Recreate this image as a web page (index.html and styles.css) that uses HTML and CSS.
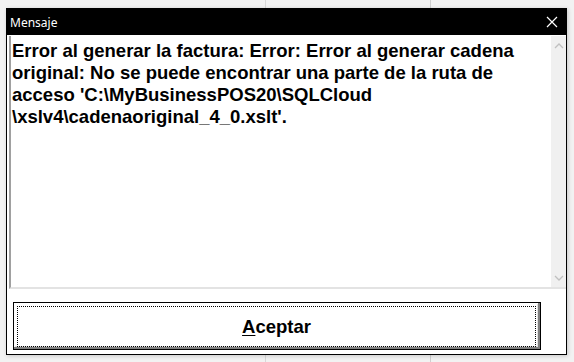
FILE: index.html
```html
<!DOCTYPE html>
<html>
<head>
<meta charset="utf-8">
<link rel="stylesheet" href="styles.css">
</head>
<body>
<div class="backdrop">
  <div class="window">
    <div class="titlebar">
      <span class="title">Mensaje</span>
      <svg class="close" width="12" height="12" viewBox="0 0 12 12"><path d="M1 1 L11 11 M11 1 L1 11" stroke="#fff" stroke-width="1.2" fill="none"/></svg>
    </div>
    <div class="textbox">
      <div class="text">Error al generar la factura: Error: Error al generar cadena original: No se puede encontrar una parte de la ruta de acceso 'C:\MyBusinessPOS20\SQLCloud \xslv4\cadenaoriginal_4_0.xslt'.</div>
      <div class="scrollbar">
        <svg class="arrow" width="10" height="6" viewBox="0 0 10 6"><path d="M1 5 L5 1 L9 5" stroke="#c0c0c0" stroke-width="1.3" fill="none"/></svg>
        <svg class="arrow" width="10" height="6" viewBox="0 0 10 6"><path d="M1 1 L5 5 L9 1" stroke="#c0c0c0" stroke-width="1.3" fill="none"/></svg>
      </div>
    </div>
    <div class="footer">
      <button class="btn"><span class="focus"><u>A</u>ceptar</span></button>
    </div>
  </div>
</div>
</body>
</html>
```
FILE: styles.css
```css
html, body {
  margin: 0;
  padding: 0;
}
body {
  width: 574px;
  height: 362px;
  overflow: hidden;
  background: #f0f0f0;
  font-family: "Liberation Sans", Arial, sans-serif;
}
.backdrop {
  width: 574px;
  height: 362px;
  background:
    linear-gradient(to right, transparent 265px, #d8d8d8 265px, #d8d8d8 266px, transparent 266px, transparent 430px, #cfcfcf 430px, #cfcfcf 431px, transparent 431px),
    #f2f2f2;
  padding: 8px 0 0 6px;
  box-sizing: border-box;
}
.window {
  width: 561px;
  height: 347px;
  box-sizing: border-box;
  border: 1px solid #000;
  background: #fff;
  display: flex;
  flex-direction: column;
  box-shadow: 1px 1px 4px rgba(0,0,0,0.18);
}
.titlebar {
  height: 26px;
  background: #000;
  color: #fff;
  display: flex;
  align-items: center;
  justify-content: space-between;
  padding: 0 8px 0 3px;
  flex-shrink: 0;
}
.title {
  font-family: "Noto Sans", "Open Sans", sans-serif;
  font-size: 12px;
}
.close {
  display: block;
}
.textbox {
  height: 253px;
  margin: 1px 0 0 2px;
  border-left: 2px solid #a0a0a0;
  border-bottom: 2px solid #e3e3e3;
  display: flex;
  box-sizing: border-box;
  flex-shrink: 0;
}
.text {
  flex: 1;
  padding: 4px 0 0 1px;
  font-size: 18.5px;
  font-weight: bold;
  line-height: 22px;
  color: #000;
}
.scrollbar {
  width: 15px;
  background: #f0f0f0;
  display: flex;
  flex-direction: column;
  justify-content: space-between;
  align-items: center;
  padding: 7px 0 6px;
}
.arrow {
  display: block;
}
.footer {
  flex: 1;
  padding: 13px 0 0 6px;
}
.btn {
  width: 528px;
  height: 48px;
  box-sizing: border-box;
  border: 1px solid #000;
  background: #fff;
  padding: 2px 3px 3px 2px;
  box-shadow: inset -2px -2px 0 #808080, inset 1px 1px 0 #fff, inset -3px -3px 0 #e0e0e0;
  display: block;
  margin: 0;
  font-family: "Liberation Sans", Arial, sans-serif;
}
.focus {
  display: flex;
  align-items: center;
  justify-content: center;
  height: 100%;
  box-sizing: border-box;
  border: 1px dotted #000;
  margin: 1px;
  padding-top: 1px;
  font-size: 18.5px;
  font-weight: bold;
  color: #000;
}
.focus u {
  text-decoration-thickness: 1px;
  text-underline-offset: 2px;
}
```
